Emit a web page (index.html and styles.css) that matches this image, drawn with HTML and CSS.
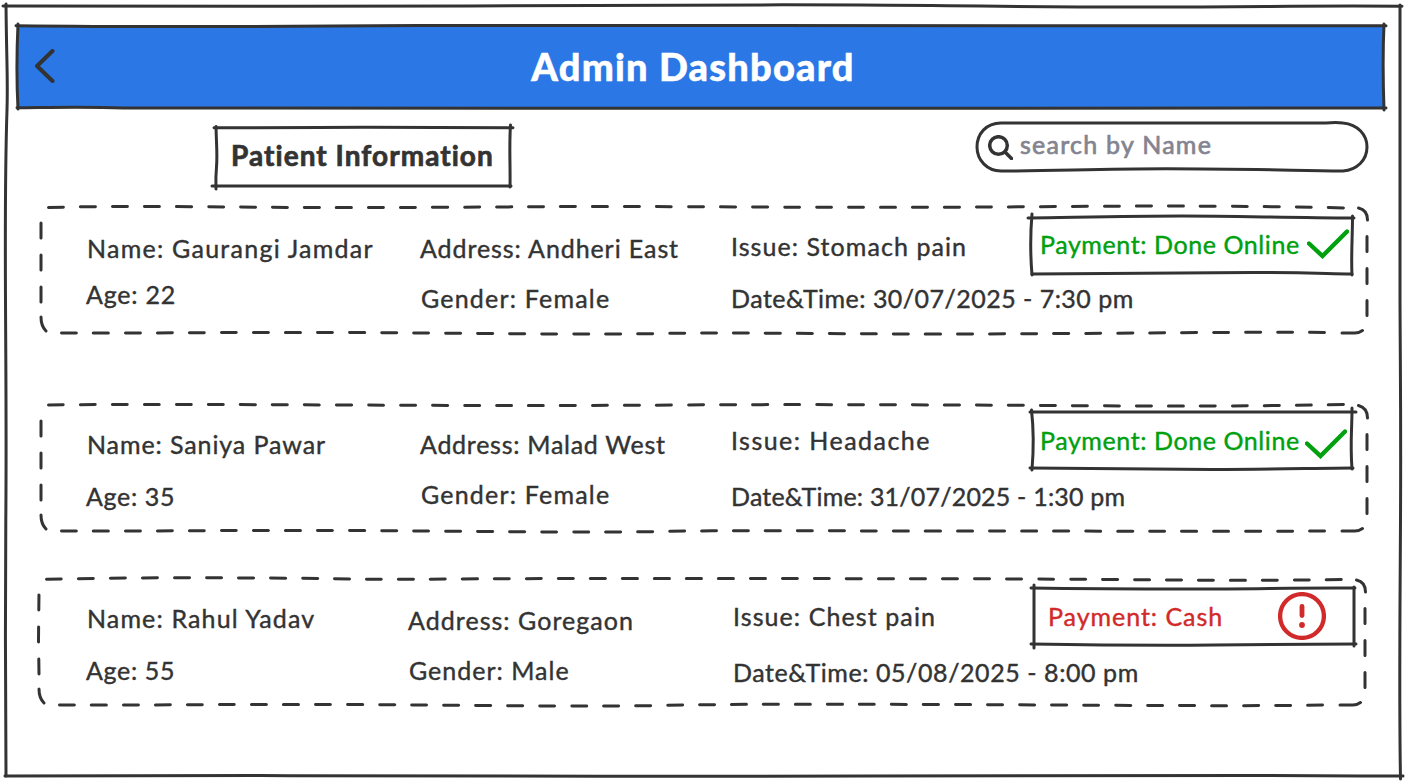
FILE: index.html
```html
<!DOCTYPE html>
<html lang="en">
<head>
<meta charset="utf-8">
<title>Admin Dashboard</title>
<link rel="stylesheet" href="styles.css">
</head>
<body>
<div class="screen">
  <svg class="sketch" viewBox="0 0 1406 782" aria-hidden="true">
    <path d="M3 6 C200 6 300 6.5 470 6 S740 4.500 860 5 S1010 7 1140 7 S1290 5.500 1402 6.200"/>
    <path d="M6 4 C6.500 60 8 80 7 110 S5 200 5.500 300 S6.500 440 5.800 520 S5.500 700 6 776"/>
    <path d="M5 776 C100 776.500 180 775 260 775.500 S400 776 600 776.300 S1150 775 1250 775.500 S1350 776 1403 776"/>
    <path d="M1400 5 C1400.500 100 1399.500 200 1400 300 S1401 420 1400.500 520 S1399 700 1400.500 779"/>
  </svg>

  <header class="topbar">
    <svg class="sketch" viewBox="0 0 1366 82" aria-hidden="true">
      <path d="M-2 -.3 C150 1.500 300 .3 400 -.5 S900 -.5 1368 -.2"/>
      <path d="M0 -2 C-1.500 30 -1.500 55 0 83"/>
      <path d="M-1 81.700 C30 81.500 70 80.500 105 82 S900 82 1368 82"/>
      <path d="M1366 -2 C1364.500 30 1365 55 1366 84"/>
    </svg>
    <svg class="back" viewBox="0 0 20 34" aria-label="Back"><path d="M17.500 2 L2 17 L17.500 32"/></svg>
    <h1 class="title">Admin Dashboard</h1>
  </header>

  <div class="toolbar">
    <div class="heading">
      <svg class="sketch" viewBox="0 0 296 59" aria-hidden="true">
        <path d="M-1 .8 C60 1 100 .2 150 .2 S250 .8 298 .8"/>
        <path d="M1 -.5 C1.500 20 2.500 28 1.500 40 S.8 55 1 62"/>
        <path d="M-3 59 C80 59.500 180 58.500 296 59"/>
        <path d="M295.500 -2 C294 20 295.500 40 295 60"/>
      </svg>
      <h2 class="heading-text">Patient Information</h2>
    </div>
    <div class="search">
      <svg class="sketch" viewBox="0 0 391 49" aria-hidden="true">
        <path d="M25 1 H350 C358 .3 362 .3 367 1 C382 2.500 391 13 391 25 C391 38 381 48 367 49 C300 48 260 46.800 190 46.800 S80 49 25 49 C11 49 1 38 1 25 S10 1 25 1Z"/>
      </svg>
      <svg class="lens" viewBox="0 0 25 25" aria-hidden="true"><circle cx="10.500" cy="10.500" r="8.800"/><path d="M17 17 L23.500 23.500"/></svg>
      <span class="placeholder">search by Name</span>
    </div>
  </div>

  <main class="patients">
    <article class="card card-first">
      <svg class="sketch" viewBox="0 0 1327 126" aria-hidden="true">
        <path class="dash" d="M8.500 .5 C60 -1 130 -.5 190 0 S300 .8 400 .3 S520 -.8 640 -.3 S830 .6 920 .2 S1150 -2.500 1308 1M1327 29.500 V111M1284.500 125.500 C1200 124.500 1050 127 900 127 S700 125 620 126.500 S420 126 300 125.500 S100 126.500 20 126M1 95 V12"/>
        <path d="M1318.500 1 Q1327.500 3 1327.500 13M1322.500 123.500 Q1319 126 1315 126 H1302M6 124 Q1 119 1 110"/>
      </svg>
      <div class="col person"><p class="name">Name: Gaurangi Jamdar</p><p class="age">Age: 22</p></div>
      <div class="col contact"><p class="address">Address: Andheri East</p><p class="gender">Gender: Female</p></div>
      <div class="visit">
        <div class="visit-top">
          <p class="issue">Issue: Stomach pain</p>
          <div class="payment paid">
            <svg class="sketch" viewBox="0 0 320 56" aria-hidden="true">
              <path d="M-4 1 C60 0 100 -1 150 -1 S250 .5 322 1"/><path d="M0 -3 C-2 20 -1.500 40 0 58"/>
              <path d="M0 57 C100 57 170 55.500 220 55.500 S290 56.500 320 57"/><path d="M320.500 -1 C320.500 20 319 40 320 58"/>
            </svg>
            <span>Payment: Done Online</span>
            <svg class="check" viewBox="0 0 42 30" aria-hidden="true"><path d="M2 14.500 L15.500 27 L40 2.500"/></svg>
          </div>
        </div>
        <p class="date">Date&amp;Time: 30/07/2025 - 7:30 pm</p>
      </div>
    </article>

    <article class="card card-second">
      <svg class="sketch" viewBox="0 0 1327 126" aria-hidden="true">
        <path class="dash" d="M8.500 0 C80 -1 180 -.5 300 0 S520 .8 640 0 S830 -.2 920 0 S1150 2.500 1308 -.5M1327 29.500 V111M1284.500 126 C1200 126.500 1050 126 900 126 S700 125 620 126.500 S420 126 300 125.500 S100 126.500 20 126M1 95 V12"/>
        <path d="M1318.500 .5 Q1327.500 3 1327.500 13M1322.500 123.500 Q1319 126 1315 126 H1302M6 124 Q1 119 1 110"/>
      </svg>
      <div class="col person"><p class="name">Name: Saniya Pawar</p><p class="age">Age: 35</p></div>
      <div class="col contact"><p class="address">Address: Malad West</p><p class="gender">Gender: Female</p></div>
      <div class="visit">
        <div class="visit-top">
          <p class="issue">Issue: Headache</p>
          <div class="payment paid">
            <svg class="sketch" viewBox="0 0 320 56" aria-hidden="true">
              <path d="M-2 0 H324"/><path d="M-.5 -2 C2 20 1.500 40 0 58"/>
              <path d="M-2 56 C60 57 120 57.500 180 57.500 S290 56 321 56"/><path d="M320 -4 C320 20 318 30 320 57"/>
            </svg>
            <span>Payment: Done Online</span>
            <svg class="check" viewBox="0 0 42 30" aria-hidden="true"><path d="M2 14.500 L15.500 27 L40 2.500"/></svg>
          </div>
        </div>
        <p class="date">Date&amp;Time: 31/07/2025 - 1:30 pm</p>
      </div>
    </article>

    <article class="card card-third">
      <svg class="sketch" viewBox="0 0 1327 126" aria-hidden="true">
        <path class="dash" d="M8.500 .3 C80 -1.500 180 -1.500 260 -.7 S320 .8 420 0 S720 -.5 920 -.2 S1150 2.500 1308 .5M1327 29.500 V111M1284.500 126 C1200 127.500 1050 126 900 125.500 S700 125 620 126.500 S420 126 300 125.500 S100 126.500 20 126M1 95 L.5 60 L1 12"/>
        <path d="M1318.500 1 Q1327.500 3 1327.500 13M1322.500 123.500 Q1319 126 1315 126 H1302M6 124 Q1 119 1 110"/>
      </svg>
      <div class="col person"><p class="name">Name: Rahul Yadav</p><p class="age">Age: 55</p></div>
      <div class="col contact"><p class="address">Address: Goregaon</p><p class="gender">Gender: Male</p></div>
      <div class="visit">
        <div class="visit-top">
          <p class="issue">Issue: Chest pain</p>
          <div class="payment due">
            <svg class="sketch" viewBox="0 0 320 56" aria-hidden="true">
              <path d="M-3 0 C60 1 100 1 160 1 S270 -.5 321 0"/><path d="M0 -3 V60"/>
              <path d="M-3 56 C60 57 120 57.500 180 57 S290 56 322 56"/><path d="M320 -1 V58"/>
            </svg>
            <span>Payment: Cash</span>
            <svg class="alert" viewBox="0 0 48 48" aria-hidden="true"><circle cx="24" cy="24" r="21.900"/><path class="bar" d="M24 14.500 V23.500"/><circle class="dot" cx="24" cy="33" r="2.900"/></svg>
          </div>
        </div>
        <p class="date">Date&amp;Time: 05/08/2025 - 8:00 pm</p>
      </div>
    </article>
  </main>
</div>
</body>
</html>
```
FILE: styles.css
```css
* { box-sizing: border-box; }
body { margin: 0; background: #fff; color: #333; font-family: Lato, "Liberation Sans", sans-serif; }
h1, h2, p { margin: 0; white-space: nowrap; }
svg { fill: none; stroke: #333; stroke-width: 3; stroke-linecap: round; stroke-linejoin: round; flex: none; }

.screen { position: relative; width: 1406px; height: 782px; overflow: hidden; padding: 26px 22px 0 18px; }
.sketch { position: absolute; inset: 0; width: 100%; height: 100%; overflow: visible; pointer-events: none; }
.dash { stroke-dasharray: 15 17; }

.topbar { position: relative; display: flex; align-items: center; justify-content: center; height: 82px; padding-bottom: 2px; background: #2b77e5; }
.topbar .sketch { width: 1366px; height: 82px; }
.back { width: 20px; height: 34px; margin-left: 17px; stroke-width: 4; }
.title { margin: 0 auto; padding-right: 53px; color: #fff; font-size: 38px; line-height: 46px; font-weight: 900; letter-spacing: 1.2px; -webkit-text-stroke: .5px #fff; }

.toolbar { display: flex; justify-content: space-between; height: 99px; padding: 14px 17px 0 197px; }
.heading { position: relative; width: 296px; height: 59px; margin-top: 5px; padding: 11px 0 0 16px; }
.heading-text { font-size: 28px; line-height: 34px; font-weight: 700; letter-spacing: 1.05px; -webkit-text-stroke: .7px #333; }
.search { position: relative; display: flex; width: 391px; height: 49px; padding: 7px 0 0 12px; }
.lens { width: 25px; height: 25px; margin-top: 6px; stroke-width: 3.500; }
.placeholder { margin-left: 7px; color: #848490; font-size: 25px; line-height: 30px; letter-spacing: 1.25px; -webkit-text-stroke: .7px #848490; }

.patients { padding-left: 22px; font-size: 25px; line-height: 30px; -webkit-text-stroke: .4px; }
.card { position: relative; display: grid; grid-template-columns: 334px 311px 1fr; width: 1327px; height: 126px; padding-left: 46px; }
.col { display: flex; flex-direction: column; }
.name { padding-left: 1px; }
.gender { padding-left: 1px; letter-spacing: 1.2px; }
.age { letter-spacing: .65px; }
.visit-top { display: flex; justify-content: space-between; height: 56px; }
.payment { position: relative; display: flex; width: 320px; height: 56px; }

.card-first .person { padding-top: 26px; gap: 16px; }
.card-first .contact { padding-top: 26px; gap: 20px; }
.card-first .visit { padding: 10px 15px 0 0; }
.card-first .name { letter-spacing: 1.25px; }
.card-first .age { letter-spacing: .78px; }
.card-first .address { letter-spacing: .91px; }
.card-first .issue { margin-top: 14px; letter-spacing: 1.07px; }
.card-first .date { margin-top: 10px; letter-spacing: .47px; }
.card-first .payment { padding-top: 12px; }

.card-second { margin-top: 72px; }
.card-second .person { padding-top: 24px; gap: 22px; }
.card-second .contact { padding-top: 24px; gap: 20px; }
.card-second .visit { padding: 7px 15px 0 0; }
.card-second .name { letter-spacing: .9px; }
.card-second .address { letter-spacing: .73px; }
.card-second .issue { margin-top: 13px; letter-spacing: 1.47px; }
.card-second .date { margin-top: 13px; letter-spacing: .2px; }
.card-second .payment { padding-top: 13px; }

.card-third { margin: 48px 0 0 -2px; padding-left: 48px; grid-template-columns: 322px 325px 1fr; }
.card-third .person { padding-top: 24px; gap: 22px; }
.card-third .contact { padding-top: 26px; gap: 20px; }
.card-third .visit { padding: 9px 11px 0 0; }
.card-third .name { letter-spacing: 1.14px; }
.card-third .address { letter-spacing: 1.04px; }
.card-third .gender { letter-spacing: 1px; }
.card-third .issue { margin-top: 13px; letter-spacing: 1.09px; }
.card-third .date { margin-top: 13px; letter-spacing: .57px; }
.card-third .payment { padding-top: 13px; }

.payment span { margin-left: 8px; white-space: nowrap; letter-spacing: .58px; }
.paid { color: #00a00f; }
.paid .check { position: absolute; left: 275px; top: 12px; width: 42px; height: 30px; stroke: #00a00f; stroke-width: 4.400; stroke-linejoin: miter; }
.card-second .check { left: 273px; top: 17px; }
.payment.due span { margin-left: 14px; letter-spacing: .96px; }
.due { color: #d12a2a; }
.alert { position: absolute; left: 244px; top: 4px; width: 48px; height: 48px; stroke: #d12a2a; stroke-width: 4.300; }
.alert .bar { stroke-width: 4.800; }
.alert .dot { fill: #d12a2a; stroke: none; }
```
